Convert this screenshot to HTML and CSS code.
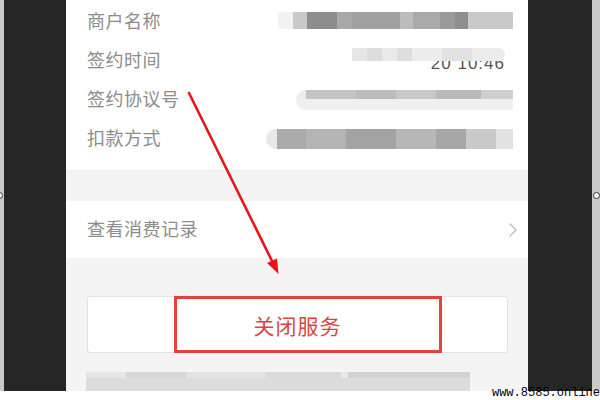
FILE: index.html
```html
<!DOCTYPE html>
<html lang="zh-CN">
  <head>
    <meta charset="UTF-8" />
    <meta name="viewport" content="width=device-width, initial-scale=1.0" />
    <title>签约详情</title>
    <link rel="stylesheet" href="styles.css">
  </head>
  <body>
    <div class="shot">
      <div class="edge edge_left"></div>
      <div class="band"></div>
      <div class="phone">
        <div class="info">
          <div class="info_row">
            <span class="label">商户名称</span>
            <span class="mosaic mosaic_name"></span>
          </div>
          <div class="info_row">
            <span class="label">签约时间</span>
            <span class="time_value">
              <span class="mosaic mosaic_time"></span>
              <span class="time_text">20 10:46</span>
            </span>
          </div>
          <div class="info_row">
            <span class="label">签约协议号</span>
            <span class="mosaic mosaic_number"></span>
          </div>
          <div class="info_row">
            <span class="label">扣款方式</span>
            <span class="mosaic mosaic_pay"></span>
          </div>
        </div>
        <div class="gap"></div>
        <div class="record_row">
          <span class="label">查看消费记录</span>
          <svg class="chevron" width="10" height="16" viewBox="0 0 10 16">
            <path d="M1.5 1.5 L8 8 L1.5 14.5" fill="none" stroke="#c4c4c4" stroke-width="1.6" />
          </svg>
        </div>
        <div class="bottom">
          <div class="close_btn">
            关闭服务
            <div class="mark_box"></div>
          </div>
          <div class="mosaic mosaic_tip"></div>
        </div>
      </div>
      <div class="band band_right"></div>
      <div class="edge edge_right"></div>
    </div>
    <div class="foot"></div>

    <span class="handle handle_left"></span>
    <span class="handle handle_right"></span>

    <svg class="arrow" width="600" height="400" viewBox="0 0 600 400">
      <line x1="189" y1="93" x2="273" y2="263" stroke="#e8141a" stroke-width="2.6" stroke-linecap="round" />
      <polygon points="278.5,274 267,263 277,258.5" fill="#e8141a" />
    </svg>

    <div class="watermark">www.8585.online</div>
  </body>
</html>
```

FILE: styles.css
```css
* {
  box-sizing: border-box;
}
body {
  margin: 0;
  width: 600px;
  height: 400px;
  overflow: hidden;
  background: #fff;
  font-family: "Noto Sans CJK SC", "Noto Sans", sans-serif;
  position: relative;
}
.shot {
  display: flex;
  height: 391px;
}
.edge {
  width: 4px;
  background: #c9c9c9;
}
.edge_right {
  width: 8px;
}
.band {
  width: 62px;
  background: #262626;
}
.band_right {
  width: 64px;
}
.phone {
  width: 462px;
  display: flex;
  flex-direction: column;
  background: #f4f4f4;
}
.info {
  background: #fff;
  padding: 2px 15px 12px 21px;
}
.info_row {
  height: 39px;
  display: flex;
  align-items: center;
  justify-content: space-between;
}
.label {
  font-size: 18px;
  line-height: 24px;
  padding-bottom: 3px;
  color: #8c8c8c;
  letter-spacing: 0.5px;
}
.mosaic {
  display: block;
  height: 17px;
  filter: blur(0.6px);
}
.mosaic_name {
  width: 235px;
  margin-top: -2px;
  background: linear-gradient(90deg, #f2f2f2 0 15px, #c9c9c9 15px 29px, #8d8d8d 29px 59px, #a9a9a9 59px 74px, #a1a1a1 74px 122px, #bcbcbc 122px 135px, #aaa 135px 162px, #9a9a9a 162px 177px, #8f8f8f 177px 190px, #c9c9c9 190px 235px);
}
.time_value {
  display: flex;
  flex-direction: column;
  align-items: flex-end;
  width: 153px;
  margin-right: 8px;
}
.mosaic_time {
  position: relative;
  z-index: 1;
  width: 153px;
  height: 13px;
  margin-bottom: -6px;
  border-radius: 0 8px 8px 0;
  background: linear-gradient(90deg, #e6e6e6 0 15px, #dcdcdc 15px 30px, #e9e9e9 30px 45px, #dedede 45px 60px, #ececec 60px 90px, #e2e2e2 90px 120px, #ebebeb 120px 153px);
}
.time_text {
  font-family: "Liberation Sans", sans-serif;
  font-size: 17px;
  line-height: 18px;
  color: #555;
  letter-spacing: 1px;
}
.mosaic_number {
  width: 217px;
  height: 20px;
  border-radius: 10px 0 0 10px;
  background: linear-gradient(180deg, transparent 0 45%, #f0f0f0 45%), linear-gradient(90deg, #ececec 0 10px, #c4c4c4 10px 60px, #bcbcbc 60px 100px, #c8c8c8 100px 140px, #b9b9b9 140px 185px, #cfcfcf 185px 217px);
}
.mosaic_pay {
  width: 247px;
  height: 20px;
  border-radius: 10px 0 0 10px;
  background: linear-gradient(90deg, #e8e8e8 0 11px, #ababab 11px 40px, #b4b4b4 40px 80px, #a3a3a3 80px 130px, #b7b7b7 130px 170px, #a7a7a7 170px 200px, #c9c9c9 200px 230px, #e2e2e2 230px 247px);
}
.gap {
  height: 31px;
  border-top: 1px solid #ececec;
}
.record_row {
  height: 57px;
  background: #fff;
  display: flex;
  align-items: center;
  justify-content: space-between;
  padding: 0 10px 0 21px;
}
.bottom {
  flex: 1;
  padding: 38px 20px 0 21px;
}
.close_btn {
  position: relative;
  height: 57px;
  background: #fff;
  border: 1px solid #e2e2e2;
  border-radius: 3px;
  display: flex;
  align-items: center;
  justify-content: center;
  font-size: 21px;
  color: #d8453e;
  letter-spacing: 1px;
}
.mark_box {
  position: absolute;
  left: 86px;
  width: 268px;
  top: -1px;
  bottom: -1px;
  border: 3px solid #e5403d;
}
.mosaic_tip {
  width: 384px;
  height: 19px;
  margin-top: 19px;
  margin-left: -1px;
  background: linear-gradient(180deg, transparent 0 30%, #dcdcdc 30%), linear-gradient(90deg, #e6e6e6 0 40px, #d7d7d7 40px 100px, #e2e2e2 100px 180px, #dadada 180px 255px, #e8e8e8 255px 262px, #d2d2d2 262px 384px);
}
.foot {
  height: 9px;
}
.handle {
  position: absolute;
  top: 192px;
  width: 7px;
  height: 7px;
  border-radius: 50%;
  background: #fff;
  border: 1px solid #333;
}
.handle_left {
  left: -4px;
}
.handle_right {
  left: 593px;
}
.arrow {
  position: absolute;
  left: 0;
  top: 0;
}
.watermark {
  position: absolute;
  right: 0;
  bottom: 0;
  font-family: "Liberation Mono", monospace;
  font-size: 12px;
  line-height: 13px;
  color: #000;
}
```
